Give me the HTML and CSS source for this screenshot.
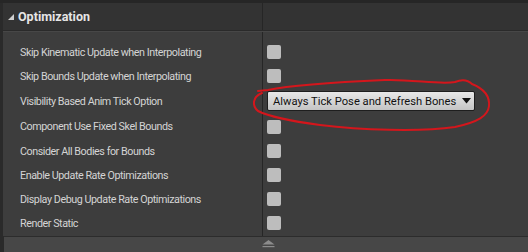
FILE: index.html
```html
<!DOCTYPE html>
<html>
<head>
<meta charset="utf-8">
<link rel="stylesheet" href="styles.css">
</head>
<body>
<div class="panel">
  <div class="header">
    <div class="header-name">
      <svg class="caret" width="6" height="6" viewBox="0 0 6 6"><polygon points="6,0 6,6 0,6" fill="#cfcfcf"/></svg>
      <span>Optimization</span>
    </div>
    <div class="header-value"></div>
  </div>
  <div class="body">
    <div class="names">
      <div class="row r24">Skip Kinematic Update when Interpolating</div>
      <div class="row r24">Skip Bounds Update when Interpolating</div>
      <div class="row r26">Visibility Based Anim Tick Option</div>
      <div class="row r25">Component Use Fixed Skel Bounds</div>
      <div class="row r24">Consider All Bodies for Bounds</div>
      <div class="row r24">Enable Update Rate Optimizations</div>
      <div class="row r24">Display Debug Update Rate Optimizations</div>
      <div class="row r24">Render Static</div>
    </div>
    <div class="values">
      <div class="row r24"><span class="check"></span></div>
      <div class="row r24"><span class="check"></span></div>
      <div class="row r26">
        <div class="combo">
          <span>Always Tick Pose and Refresh Bones</span>
          <svg width="9" height="6" viewBox="0 0 9 6"><polygon points="0,0 9,0 4.5,5.5" fill="#111"/></svg>
        </div>
      </div>
      <div class="row r25"><span class="check"></span></div>
      <div class="row r24"><span class="check"></span></div>
      <div class="row r24"><span class="check"></span></div>
      <div class="row r24"><span class="check"></span></div>
      <div class="row r24"><span class="check"></span></div>
    </div>
  </div>
  <div class="footer">
    <svg width="13" height="8" viewBox="0 0 13 8"><polygon points="6.5,0 12.5,4.5 0.5,4.5" fill="#8c8c8c"/><rect x="0.5" y="6" width="12" height="1.2" fill="#8c8c8c"/></svg>
  </div>
  <svg class="annotation" width="528" height="252" viewBox="0 0 528 252">
    <path d="M 258 91 L 268 90 C 292 85, 340 82, 385 80 C 412 79, 440 85, 455 82 C 462 79, 468 80, 472 84 C 482 88, 490 95, 489 106 C 488 116, 478 122, 455 127 C 420 132, 360 130, 320 125 C 290 121, 268 116, 258 111 C 252 106, 252 97, 262 93" fill="none" stroke="#d4161c" stroke-width="2" stroke-linecap="round" stroke-linejoin="round"/>
  </svg>
</div>
</body>
</html>
```
FILE: styles.css
```css
html, body {
  margin: 0;
  padding: 0;
}
body {
  width: 528px;
  height: 252px;
  background: #2a2a2a;
  font-family: Roboto, "Liberation Sans", sans-serif;
  overflow: hidden;
}
.panel {
  position: relative;
  height: 252px;
  padding-left: 3px;
  display: flex;
  flex-direction: column;
  box-sizing: border-box;
  border-top: 3px solid #262626;
}
.header {
  display: flex;
  height: 27px;
  background: #333333;
  border-bottom: 1px solid #2a2a2a;
}
.header-name {
  width: 259px;
  display: flex;
  align-items: center;
  padding-left: 5px;
  gap: 4px;
  color: #e6e6e6;
  font-weight: bold;
  font-size: 12.5px;
  box-sizing: border-box;
}
.caret {
  margin-top: 1px;
}
.header-value {
  flex: 1;
  border-left: 1px solid #262626;
}
.body {
  display: flex;
  background: #3d3d3d;
  border-top: 1px solid #474747;
  height: 205px;
  box-sizing: border-box;
}
.names {
  width: 259px;
  padding-top: 8px;
}
.values {
  flex: 1;
  padding-top: 8px;
  border-left: 1px solid #262626;
}
.row {
  display: flex;
  align-items: center;
  box-sizing: border-box;
}
.r24 { height: 24px; }
.r25 { height: 25px; }
.r26 { height: 26px; }
.names .row {
  padding-left: 17px;
  color: #d4d4d4;
  font-size: 10.75px;
  letter-spacing: -0.45px;
}
.values .row {
  padding-left: 4px;
}
.check {
  width: 14px;
  height: 14px;
  border-radius: 2px;
  background: #bdbdbd;
}
.combo {
  width: 208px;
  height: 20px;
  box-sizing: border-box;
  border: 1px solid #1e1e1e;
  border-radius: 2px;
  background: linear-gradient(#e8e8e8, #c4c4c4);
  display: flex;
  align-items: center;
  justify-content: space-between;
  padding-left: 5px;
  padding-right: 3px;
  color: #111;
  font-size: 11.2px;
}
.footer {
  flex: 1;
  background: #474747;
  border-top: 1px solid #2c2c2c;
  margin-left: 1px;
  display: flex;
  justify-content: center;
  padding-top: 3px;
  box-sizing: border-box;
}
.footer svg {
  margin-left: 4px;
}
.annotation {
  position: absolute;
  left: 0;
  top: -3px;
  pointer-events: none;
}
```
